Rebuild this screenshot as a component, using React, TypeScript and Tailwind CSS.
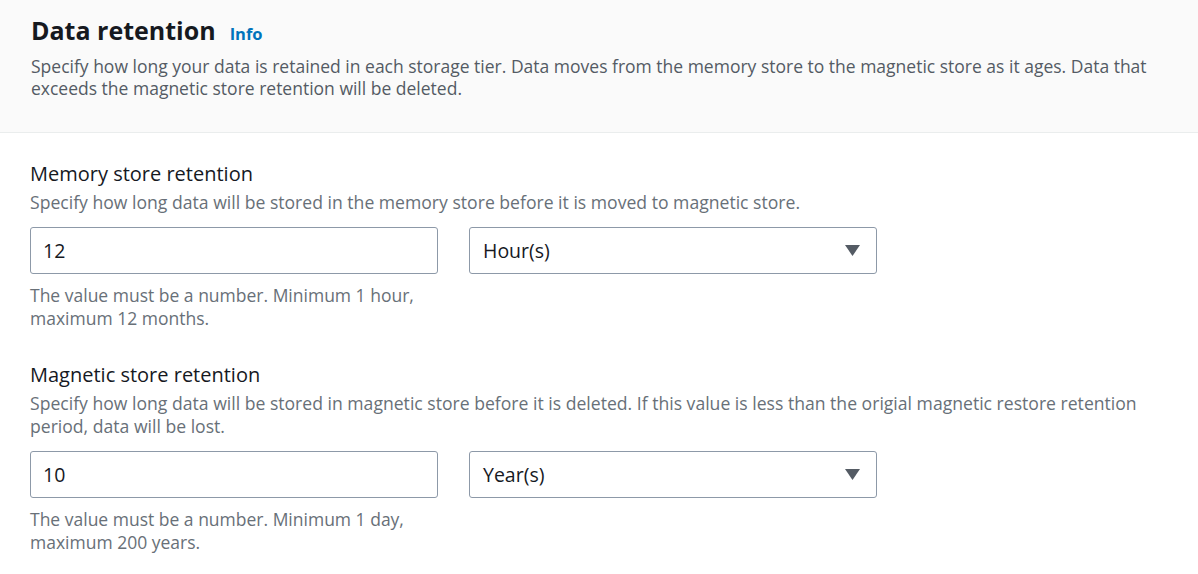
import React from "react";

const font = { fontFamily: '"Open Sans", "Liberation Sans", sans-serif' };

function Field({
  label,
  description,
  value,
  unit,
  hint,
}: {
  label: string;
  description: React.ReactNode;
  value: string;
  unit: string;
  hint: React.ReactNode;
}) {
  return (
    <div className="flex flex-col">
      <label className="text-[20px] leading-[24px] text-[#16191f]">{label}</label>
      <p className="mt-[5px] text-[17.6px] leading-[23px] text-[#687078]">{description}</p>
      <div className="mt-[13px] flex gap-[31px]">
        <div className="flex h-[47px] w-[408px] items-center rounded-[3px] border border-[#8d99a8] bg-white px-[12px] text-[19.5px] text-[#16191f]">
          {value}
        </div>
        <div className="flex h-[47px] w-[408px] items-center justify-between rounded-[3px] border border-[#8d99a8] bg-white pl-[13px] pr-[16px] text-[19.5px] text-[#16191f]">
          <span>{unit}</span>
          <svg width="15" height="11" viewBox="0 0 15 11">
            <path d="M0 0 H15 L7.5 11 Z" fill="#545b64" />
          </svg>
        </div>
      </div>
      <p className="mt-[10px] text-[17.5px] leading-[23px] text-[#687078]">{hint}</p>
    </div>
  );
}

export default function App() {
  return (
    <div className="min-h-[574px] w-full bg-white" style={font}>
      <div className="border-b border-[#eaeded] bg-[#fafafa] px-[31px] pt-[14px] pb-[33px]">
        <div className="flex items-baseline gap-[14px]">
          <h2 className="text-[25px] font-bold leading-[32px] text-[#16191f]">Data retention</h2>
          <span className="text-[16.5px] font-bold text-[#0073bb]">Info</span>
        </div>
        <p className="mt-[8px] text-[17.5px] leading-[22px] text-[#545b64]">
          Specify how long your data is retained in each storage tier. Data moves from the memory store to the magnetic
          store as it ages. Data that
          <br />
          exceeds the magnetic store retention will be deleted.
        </p>
      </div>

      <div className="flex flex-col gap-[33px] px-[30px] pt-[29px]">
        <Field
          label="Memory store retention"
          description="Specify how long data will be stored in the memory store before it is moved to magnetic store."
          value="12"
          unit="Hour(s)"
          hint={
            <>
              The value must be a number. Minimum 1 hour,
              <br />
              maximum 12 months.
            </>
          }
        />
        <Field
          label="Magnetic store retention"
          description={
            <>
              Specify how long data will be stored in magnetic store before it is deleted. If this value is less than the
              origial magnetic restore retention
              <br />
              period, data will be lost.
            </>
          }
          value="10"
          unit="Year(s)"
          hint={
            <>
              The value must be a number. Minimum 1 day,
              <br />
              maximum 200 years.
            </>
          }
        />
      </div>
    </div>
  );
}
